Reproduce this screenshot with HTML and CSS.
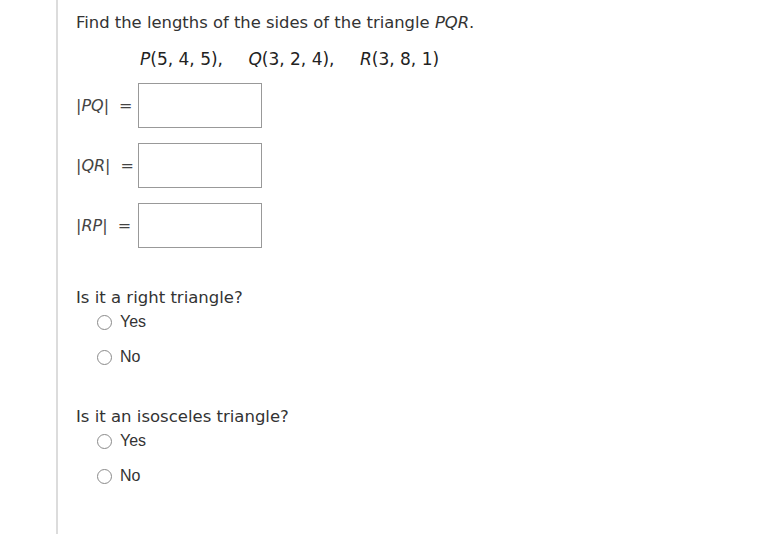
FILE: index.html
```html
<!DOCTYPE html>
<html>
<head>
  <title>Triangle PQR</title>
  <link rel="stylesheet" href="styles.css">
</head>
<body>
  <div class="question">
    <p class="prompt">Find the lengths of the sides of the triangle <i>PQR</i>.</p>
    <p class="points">
      <span><i>P</i>(5, 4, 5),</span>
      <span><i>Q</i>(3, 2, 4),</span>
      <span><i>R</i>(3, 8, 1)</span>
    </p>

    <div class="answer">
      <label class="side" for="pq">|<i>PQ</i>| =</label>
      <input type="text" id="pq" class="box" />
    </div>
    <div class="answer">
      <label class="side" for="qr">|<i>QR</i>| =</label>
      <input type="text" id="qr" class="box" />
    </div>
    <div class="answer">
      <label class="side" for="rp">|<i>RP</i>| =</label>
      <input type="text" id="rp" class="box" />
    </div>

    <!-- right triangle -->
    <p class="ask">Is it a right triangle?</p>
    <label class="choice"><input type="radio" name="right" value="yes" /> Yes</label>
    <label class="choice"><input type="radio" name="right" value="no" /> No</label>

    <!-- isosceles -->
    <p class="ask second">Is it an isosceles triangle?</p>
    <label class="choice"><input type="radio" name="iso" value="yes" /> Yes</label>
    <label class="choice"><input type="radio" name="iso" value="no" /> No</label>
  </div>
</body>
</html>
```

FILE: styles.css
```css
body {
  margin: 0;
  background-color: #fff;
  font-family: "DejaVu Sans", Verdana, sans-serif;
  color: #333;
}

.question {
  margin-left: 56px;
  border-left: 2px solid #dcdcdc;
  padding: 13px 0 0 18px;
  min-height: 521px;
}

p {
  margin: 0;
}

.prompt {
  font-size: 16.4px;
  line-height: 20px;
}

.points {
  margin: 16px 0 14px 64px;
  font-size: 17px;
  line-height: 20px;
  color: #222;
}

.points span {
  margin-right: 20px;
}

.answer {
  display: flex;
  align-items: center;
  margin-bottom: 15px;
}

.side {
  width: 62px;
  font-size: 16px;
  word-spacing: 5px;
  color: #444;
}

.box {
  box-sizing: border-box;
  width: 124px;
  height: 45px;
  margin: 0;
  border: 1px solid #999;
  padding: 4px;
  font-size: 14px;
}

.ask {
  margin-top: 40px;
  margin-bottom: 4px;
  font-size: 16.5px;
  line-height: 20px;
}

.ask.second {
  margin-top: 40px;
}

.choice {
  display: flex;
  align-items: center;
  height: 20px;
  margin: 0 0 15px 21px;
  font-family: "Liberation Sans", Arial, sans-serif;
  font-size: 16px;
  color: #333;
}

.choice input {
  appearance: none;
  width: 15px;
  height: 15px;
  margin: 0 8px 0 0;
  border: 1px solid #8a8a8a;
  border-radius: 50%;
  background-color: #fff;
}
```
